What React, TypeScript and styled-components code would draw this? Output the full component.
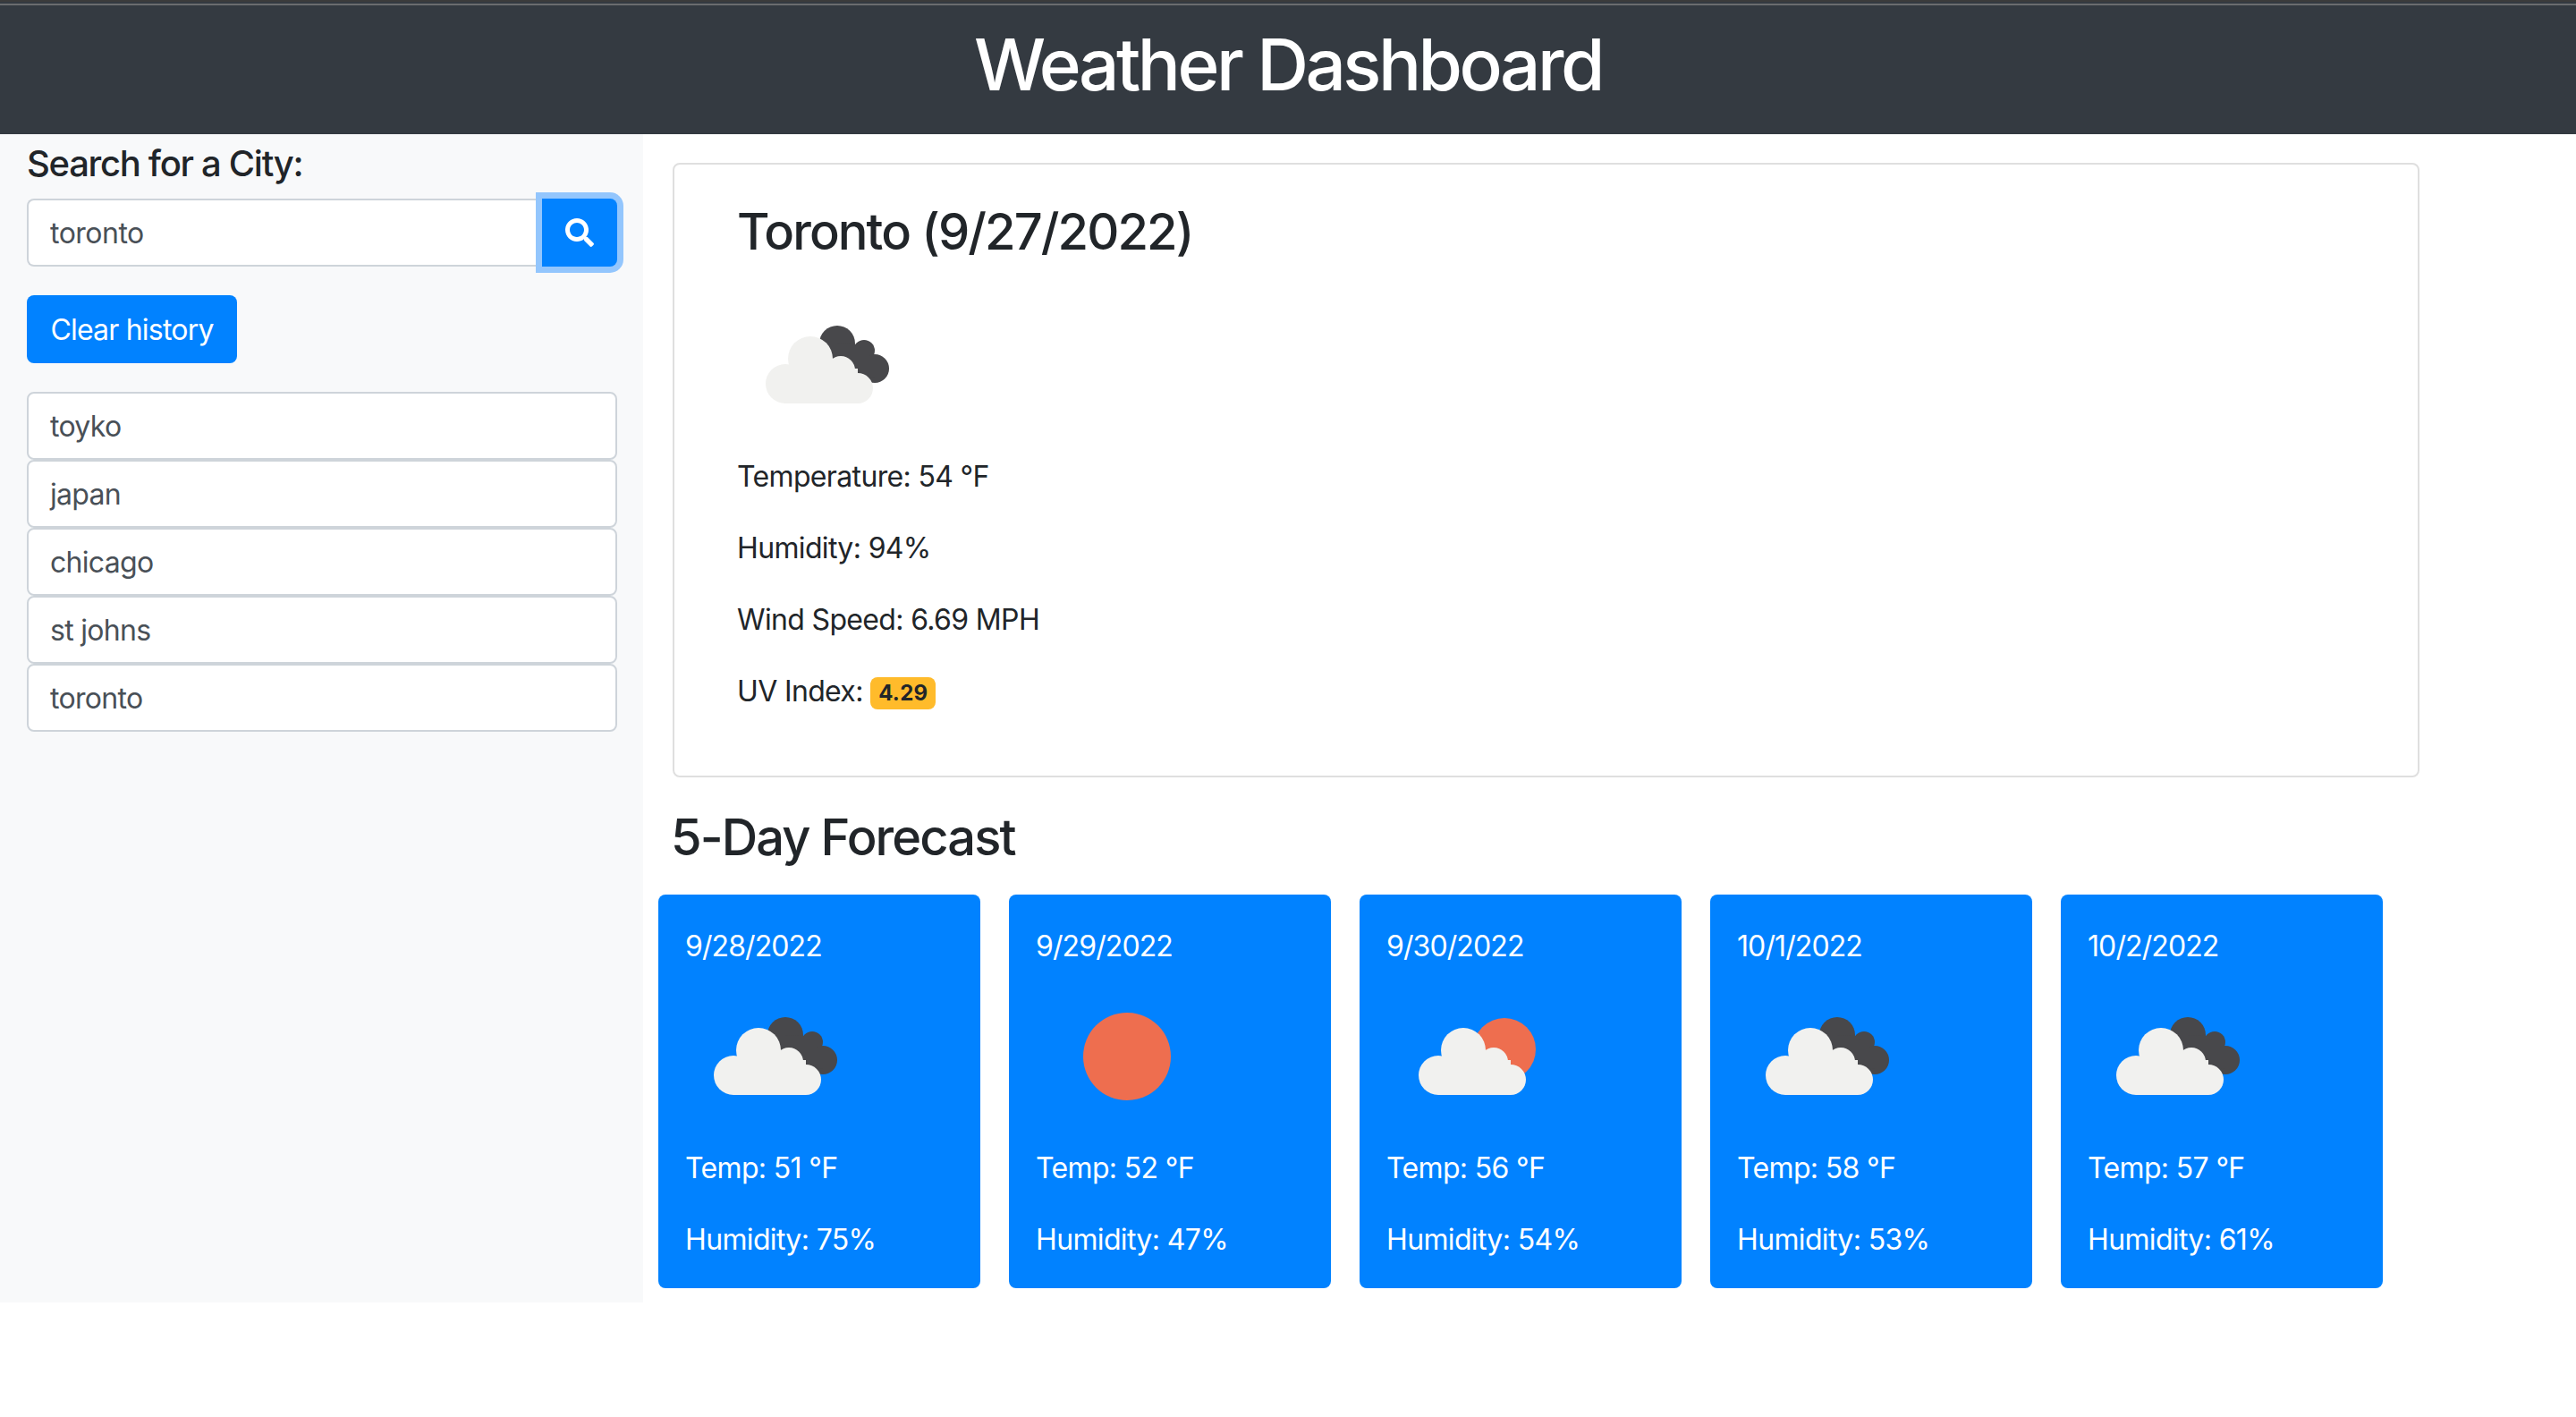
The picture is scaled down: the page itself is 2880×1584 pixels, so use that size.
import React from 'react';
import styled, { createGlobalStyle } from 'styled-components';
import { FaSearch } from 'react-icons/fa';

const GlobalStyle = createGlobalStyle`
  html, body {
    margin: 0;
    padding: 0;
    background: #fff;
  }
  body {
    font-family: Inter, "Liberation Sans", sans-serif;
    font-size: 32px;
    line-height: 48px;
    letter-spacing: -0.65px;
    color: #212529;
  }
  * {
    box-sizing: border-box;
  }
`;

const Header = styled.header`
  height: 150px;
  background: #343a41;
  border-top: 2px solid #3b3b3b;
  display: flex;
  justify-content: center;
  position: relative;
  &::before {
    content: '';
    position: absolute;
    top: 2px;
    left: 0;
    right: 0;
    height: 2px;
    background: #6a6c6e;
  }
`;

const Title = styled.h1`
  margin: 22px 0 0;
  font-size: 80px;
  line-height: 96px;
  font-weight: 500;
  letter-spacing: -3.5px;
  color: #fff;
`;

const Layout = styled.div`
  display: grid;
  grid-template-columns: 719px 1fr;
`;

const Sidebar = styled.aside`
  background: #f8f9fa;
  padding: 9px 29px 0 30px;
`;

const SearchLabel = styled.h5`
  margin: 0 0 15px;
  font-size: 40px;
  line-height: 48px;
  font-weight: 500;
  letter-spacing: -1.3px;
`;

const SearchGroup = styled.div`
  display: flex;
  height: 76px;
  margin-bottom: 32px;
`;

const SearchInput = styled.input`
  flex: 1;
  min-width: 0;
  padding: 2px 24px 0;
  border: 2px solid #ced4da;
  border-right: none;
  border-radius: 8px 0 0 8px;
  background: #fff;
  color: #495057;
  font: inherit;
  letter-spacing: -0.5px;
  outline: none;
`;

const SearchButton = styled.button`
  width: 84px;
  border: none;
  border-radius: 0 8px 8px 0;
  background: #0182ff;
  color: #fff;
  box-shadow: 0 0 0 7px #93c6fd;
  display: flex;
  align-items: center;
  justify-content: center;
  padding: 0;
  position: relative;
`;

const ClearButton = styled.button`
  display: block;
  width: 235px;
  height: 76px;
  margin-bottom: 32px;
  padding: 2px 0 0;
  border: none;
  border-radius: 8px;
  background: #0182ff;
  color: #fff;
  font: inherit;
  letter-spacing: -0.8px;
`;

const HistoryList = styled.div`
  display: flex;
  flex-direction: column;
`;

const HistoryItem = styled.button`
  height: 76px;
  padding: 2px 24px 0;
  border: 2px solid #ced4da;
  border-radius: 8px;
  background: #fff;
  color: #495057;
  font: inherit;
  letter-spacing: -0.7px;
  text-align: left;
`;

const Main = styled.main`
  padding: 32px 0 16px 33px;
`;

const CurrentCard = styled.section`
  width: 1953px;
  margin-bottom: 32px;
  padding: 40px 70px;
  border: 2px solid #dfdfdf;
  border-radius: 8px;
`;

const SectionTitle = styled.h3`
  margin: 0 0 16px;
  padding-top: 2px;
  height: 67px;
  font-size: 56px;
  line-height: 67px;
  font-weight: 500;
  letter-spacing: -1.9px;
`;

const ForecastTitle = styled(SectionTitle)`
  margin-left: -2px;
`;

const Stat = styled.p`
  margin: 0 0 30px;
  padding-top: 2px;
`;

const Badge = styled.span`
  display: inline-block;
  padding: 5px 9px;
  border-radius: 8px;
  background: #ffbb2b;
  font-size: 24px;
  line-height: 26px;
  font-weight: 700;
  letter-spacing: 0.3px;
  vertical-align: 1px;
`;

const ForecastRow = styled.div`
  display: flex;
  gap: 32px;
  margin: 32px 0 0 -16px;
`;

const ForecastCard = styled.article`
  width: 360px;
  height: 440px;
  padding: 32px 30px;
  border-radius: 8px;
  background: #0182ff;
  color: #fff;
`;

const ForecastLine = styled.p`
  margin: 0 0 30px;
  padding-top: 2px;
  &:first-child {
    margin: 0;
    height: 48px;
    letter-spacing: -0.9px;
  }
`;

const IconSvg = styled.svg`
  display: block;
  width: 200px;
  height: 200px;
  margin-left: 2px;
`;

const CLOUD = '#f1f1ef';
const DARK = '#48484b';
const SUN = '#ee6e4f';

const WhiteCloud = ({ dx = 0 }: { dx?: number }) => (
  <g fill={CLOUD} transform={`translate(${dx} 0)`}>
    <circle cx="56" cy="122" r="22" />
    <circle cx="84" cy="94" r="25" />
    <circle cx="118" cy="107" r="16" />
    <circle cx="137" cy="127" r="17" />
    <rect x="56" y="105" width="81" height="39" />
    <rect x="70" y="94" width="48" height="20" />
  </g>
);

const WeatherIcon = ({ kind }: { kind: 'clouds' | 'sun' | 'partly' }) => {
  if (kind === 'sun') {
    return <circle cx="100" cy="101" r="49" fill={SUN} />;
  }
  if (kind === 'partly') {
    return (
      <>
        <circle cx="130" cy="93" r="35" fill={SUN} />
        <WhiteCloud />
      </>
    );
  }
  return (
    <>
      <g fill={DARK}>
        <circle cx="110" cy="77" r="20" />
        <circle cx="140" cy="85" r="12" />
        <circle cx="152" cy="105" r="16" />
        <path d="M110 77 L131 78 L140 85 L152 95 L152 115 L110 110 Z" />
      </g>
      <WhiteCloud dx={-4} />
    </>
  );
};

const forecast: { date: string; kind: 'clouds' | 'sun' | 'partly'; temp: number; humidity: number }[] = [
  { date: '9/28/2022', kind: 'clouds', temp: 51, humidity: 75 },
  { date: '9/29/2022', kind: 'sun', temp: 52, humidity: 47 },
  { date: '9/30/2022', kind: 'partly', temp: 56, humidity: 54 },
  { date: '10/1/2022', kind: 'clouds', temp: 58, humidity: 53 },
  { date: '10/2/2022', kind: 'clouds', temp: 57, humidity: 61 },
];

const history = ['toyko', 'japan', 'chicago', 'st johns', 'toronto'];

const App: React.FC = () => {
  return (
    <>
      <GlobalStyle />
      <Header>
        <Title>Weather Dashboard</Title>
      </Header>
      <Layout>
        <Sidebar>
          <SearchLabel>Search for a City:</SearchLabel>
          <SearchGroup>
            <SearchInput defaultValue="toronto" />
            <SearchButton aria-label="Search">
              <FaSearch size={32} />
            </SearchButton>
          </SearchGroup>
          <ClearButton>Clear history</ClearButton>
          <HistoryList>
            {history.map((city) => (
              <HistoryItem key={city}>{city}</HistoryItem>
            ))}
          </HistoryList>
        </Sidebar>
        <Main>
          <CurrentCard>
            <SectionTitle>Toronto (9/27/2022)</SectionTitle>
            <IconSvg viewBox="0 0 200 200">
              <WeatherIcon kind="clouds" />
            </IconSvg>
            <Stat>Temperature: 54 °F</Stat>
            <Stat>Humidity: 94%</Stat>
            <Stat>Wind Speed: 6.69 MPH</Stat>
            <Stat>
              UV Index: <Badge>4.29</Badge>
            </Stat>
          </CurrentCard>
          <ForecastTitle>5-Day Forecast</ForecastTitle>
          <ForecastRow>
            {forecast.map((day) => (
              <ForecastCard key={day.date}>
                <ForecastLine>{day.date}</ForecastLine>
                <IconSvg viewBox="0 0 200 200">
                  <WeatherIcon kind={day.kind} />
                </IconSvg>
                <ForecastLine>Temp: {day.temp} °F</ForecastLine>
                <ForecastLine>Humidity: {day.humidity}%</ForecastLine>
              </ForecastCard>
            ))}
          </ForecastRow>
        </Main>
      </Layout>
    </>
  );
};

export default App;
